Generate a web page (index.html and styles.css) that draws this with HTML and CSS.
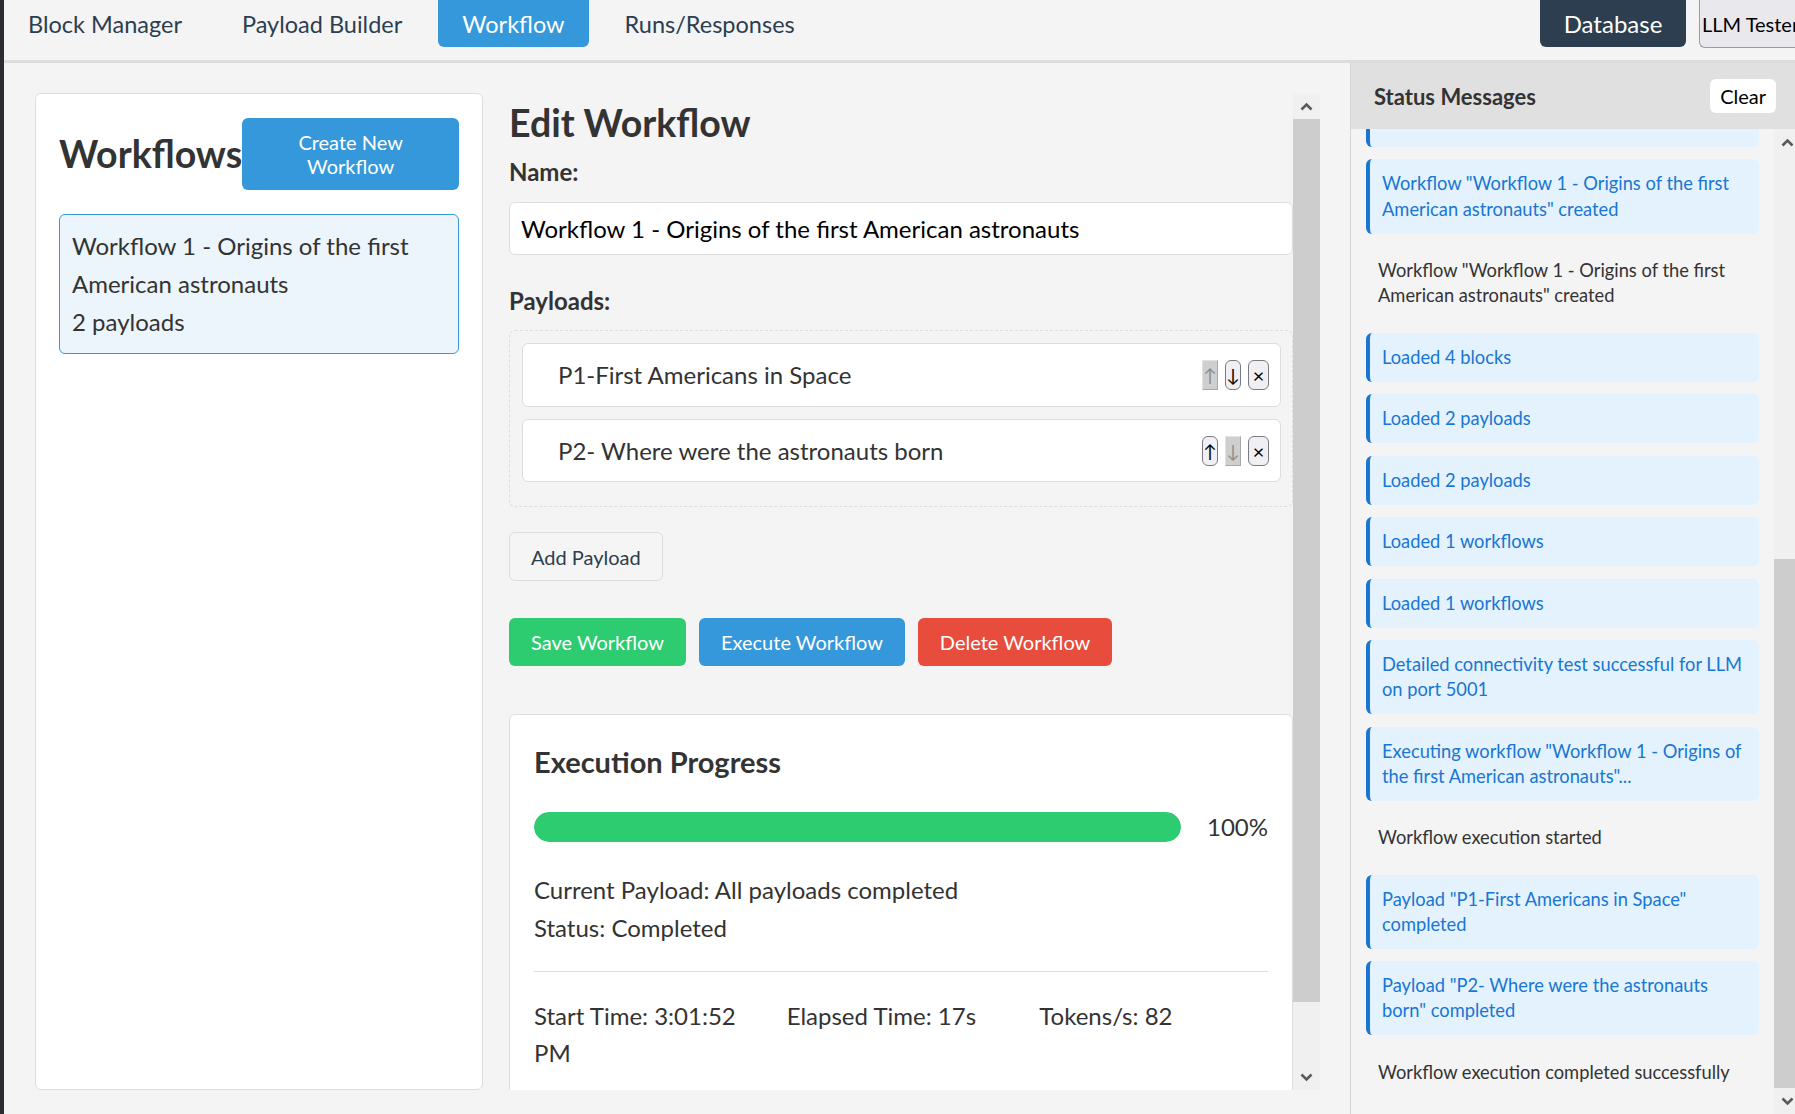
FILE: index.html
```html
<!DOCTYPE html>
<html lang="en">
<head>
<meta charset="utf-8">
<title>Workflow</title>
<link rel="stylesheet" href="styles.css">
</head>
<body>
<div class="app">
  <header class="topbar">
    <nav class="tabs">
      <button class="tab">Block Manager</button>
      <button class="tab">Payload Builder</button>
      <button class="tab active">Workflow</button>
      <button class="tab">Runs/Responses</button>
    </nav>
    <div class="top-actions">
      <button class="db-btn">Database</button>
      <button class="llm-btn">LLM Tester</button>
    </div>
  </header>

  <main class="main">
    <div class="workspace">
      <aside class="wf-panel">
        <div class="wf-head">
          <h2>Workflows</h2>
          <button class="btn btn-blue">Create New Workflow</button>
        </div>
        <div class="wf-item">
          <div class="wf-name">Workflow 1 - Origins of the first American astronauts</div>
          <div class="wf-meta">2 payloads</div>
        </div>
      </aside>

      <section class="editor">
        <div class="editor-scroll">
          <h2 class="editor-title">Edit Workflow</h2>
          <label class="field-label">Name:</label>
          <input class="name-input" type="text" value="Workflow 1 - Origins of the first American astronauts">
          <label class="field-label payloads-label">Payloads:</label>
          <div class="payload-list">
            <div class="payload-item">
              <span class="payload-name">P1-First Americans in Space</span>
              <div class="item-actions">
                <button class="mini" disabled>↑</button>
                <button class="mini">↓</button>
                <button class="mini mini-x">×</button>
              </div>
            </div>
            <div class="payload-item">
              <span class="payload-name">P2- Where were the astronauts born</span>
              <div class="item-actions">
                <button class="mini">↑</button>
                <button class="mini" disabled>↓</button>
                <button class="mini mini-x">×</button>
              </div>
            </div>
          </div>
          <button class="btn btn-light">Add Payload</button>
          <div class="actions">
            <button class="btn btn-green">Save Workflow</button>
            <button class="btn btn-blue">Execute Workflow</button>
            <button class="btn btn-red">Delete Workflow</button>
          </div>
          <div class="progress-card">
            <h3>Execution Progress</h3>
            <div class="progress-row">
              <div class="bar"><div class="bar-fill" style="width: 100%"></div></div>
              <span class="pct">100%</span>
            </div>
            <div class="progress-info">
              <div>Current Payload: All payloads completed</div>
              <div>Status: Completed</div>
            </div>
            <div class="divider"></div>
            <div class="stats">
              <div>Start Time: 3:01:52 PM</div>
              <div>Elapsed Time: 17s</div>
              <div>Tokens/s: 82</div>
            </div>
          </div>
        </div>
        <div class="scrollbar sb-editor">
          <span class="sb-btn"><svg width="13" height="9" viewBox="0 0 13 9"><polyline points="1.5,7.5 6.5,2.5 11.5,7.5" fill="none" stroke="#5a5a5a" stroke-width="2.6"/></svg></span>
          <span class="sb-thumb"></span>
          <span class="sb-track"></span>
          <span class="sb-btn"><svg width="13" height="9" viewBox="0 0 13 9"><polyline points="1.5,1.5 6.5,6.5 11.5,1.5" fill="none" stroke="#5a5a5a" stroke-width="2.6"/></svg></span>
        </div>
      </section>
    </div>

    <aside class="status">
      <div class="status-head">
        <h3>Status Messages</h3>
        <button class="clear-btn">Clear</button>
      </div>
      <div class="status-body">
        <div class="status-list">
          <div class="status-inner">
            <div class="msg msg-info">Loaded 4 blocks</div>
            <div class="msg msg-info">Workflow "Workflow 1 - Origins of the first American astronauts" created</div>
            <div class="msg">Workflow "Workflow 1 - Origins of the first American astronauts" created</div>
            <div class="msg msg-info">Loaded 4 blocks</div>
            <div class="msg msg-info">Loaded 2 payloads</div>
            <div class="msg msg-info">Loaded 2 payloads</div>
            <div class="msg msg-info">Loaded 1 workflows</div>
            <div class="msg msg-info">Loaded 1 workflows</div>
            <div class="msg msg-info">Detailed connectivity test successful for LLM on port 5001</div>
            <div class="msg msg-info">Executing workflow "Workflow 1 - Origins of the first American astronauts"...</div>
            <div class="msg">Workflow execution started</div>
            <div class="msg msg-info">Payload "P1-First Americans in Space" completed</div>
            <div class="msg msg-info">Payload "P2- Where were the astronauts born" completed</div>
            <div class="msg">Workflow execution completed successfully</div>
          </div>
        </div>
        <div class="scrollbar sb-status">
          <span class="sb-btn"><svg width="13" height="9" viewBox="0 0 13 9"><polyline points="1.5,7.5 6.5,2.5 11.5,7.5" fill="none" stroke="#5a5a5a" stroke-width="2.6"/></svg></span>
          <span class="sb-track"></span>
          <span class="sb-thumb"></span>
          <span class="sb-btn"><svg width="13" height="9" viewBox="0 0 13 9"><polyline points="1.5,1.5 6.5,6.5 11.5,1.5" fill="none" stroke="#5a5a5a" stroke-width="2.6"/></svg></span>
        </div>
      </div>
    </aside>
  </main>
</div>
</body>
</html>
```

FILE: styles.css
```css
* { box-sizing: border-box; }

html, body {
  margin: 0;
  padding: 0;
  overflow: hidden;
  background: #f4f4f4;
}

body {
  font-family: Lato, "Liberation Sans", sans-serif;
  color: #333;
}

button, input {
  font-family: inherit;
}

.app {
  width: 1800px;
  height: 1114px;
  border-left: 4px solid #2b2b31;
  display: flex;
  flex-direction: column;
  background: #f4f4f4;
}

/* ---------- top bar ---------- */
.topbar {
  flex: none;
  height: 63px;
  display: flex;
  align-items: flex-start;
  border-bottom: 3px solid #dcdcdc;
}

.tabs {
  display: flex;
  gap: 12px;
}

.tab {
  height: 47px;
  padding: 0 24px;
  border: 0;
  background: transparent;
  color: #2c3e50;
  font-size: 23.5px;
  border-radius: 0 0 6px 6px;
  white-space: nowrap;
}

.tab.active {
  background: #3498db;
  color: #fff;
}

.top-actions {
  margin-left: auto;
  display: flex;
  gap: 13px;
}

.db-btn {
  height: 47px;
  width: 146px;
  border: 0;
  border-radius: 0 0 6px 6px;
  background: #2c3e50;
  color: #fff;
  font-size: 24px;
}

.llm-btn {
  height: 48px;
  width: 101px;
  padding: 0 0 0 2px;
  text-align: left;
  white-space: nowrap;
  overflow: visible;
  border: 1.5px solid #9a9aa6;
  border-top: 0;
  border-right: 0;
  border-radius: 0 0 0 6px;
  background: #e9e9ed;
  color: #000;
  font-size: 20px;
}

/* ---------- main ---------- */
.main {
  flex: 1;
  display: flex;
  min-height: 0;
}

.workspace {
  width: 1346px;
  flex: none;
  display: flex;
  gap: 24px;
  padding: 30px 30px 24px 31px;
}

/* left workflows card */
.wf-panel {
  width: 448px;
  flex: none;
  background: #fff;
  border: 1.5px solid #dedede;
  border-radius: 6px;
  padding: 23.5px 23px;
}

.wf-head {
  display: flex;
  align-items: center;
  justify-content: space-between;
  margin-bottom: 24px;
}

.wf-head h2 {
  margin: 0;
  font-size: 37.5px;
  line-height: 44px;
  font-weight: 700;
  white-space: nowrap;
  color: #333;
}

.wf-item {
  border: 1.5px solid #3498db;
  background: #ebf5fb;
  border-radius: 6px;
  padding: 12px 12px;
  font-size: 24px;
  line-height: 38px;
  color: #333;
}

/* buttons */
.btn {
  border: 0;
  border-radius: 6px;
  padding: 12px 22px;
  font-size: 20px;
  line-height: 24px;
  color: #fff;
}

.btn-blue { background: #3498db; }
.btn-green { background: #2ecc71; }
.btn-red { background: #e74c3c; }

.btn-light {
  display: block;
  height: 49px;
  margin-top: 25px;
  padding: 0 21px;
  background: #f5f5f5;
  border: 1.5px solid #dddddd;
  color: #2c3e50;
}

/* editor column */
.editor {
  width: 813px;
  flex: none;
  display: flex;
}

.editor-scroll {
  flex: 1;
  min-width: 0;
  overflow: hidden;
  padding: 8px 0 0 2px;
}

.editor-title {
  margin: 0 0 9px;
  font-size: 37.5px;
  line-height: 44px;
  font-weight: 700;
  color: #333;
}

.field-label {
  display: block;
  font-size: 24px;
  line-height: 36px;
  font-weight: 700;
  color: #333;
  margin-bottom: 12px;
}

.payloads-label {
  margin-top: 28px;
  margin-bottom: 11px;
}

.name-input {
  display: block;
  width: 100%;
  height: 53px;
  padding: 0 11px;
  border: 1.5px solid #dddddd;
  border-radius: 6px;
  background: #fff;
  color: #000;
  font-size: 24px;
}

.payload-list {
  border: 1.5px dashed #dddddd;
  border-radius: 6px;
  padding: 12px 11.5px;
}

.payload-item {
  height: 64px;
  display: flex;
  align-items: center;
  justify-content: space-between;
  background: #fff;
  border: 1.5px solid #dddddd;
  border-radius: 6px;
  padding: 0 10.5px 0 35.5px;
  margin-bottom: 12px;
}

.payload-item + .payload-item {
  height: 63px;
}

.payload-name {
  font-size: 24px;
  line-height: 30px;
  color: #333;
}

.item-actions {
  display: flex;
  gap: 7px;
}

.mini {
  width: 16px;
  height: 30px;
  padding: 0;
  border: 1px solid #7a7a84;
  border-radius: 6px;
  background: #f0f0f4;
  color: #000;
  font-size: 18px;
  line-height: 26px;
  text-align: center;
}

.mini-x {
  width: 21px;
  font-size: 20px;
}

.mini:disabled {
  border-radius: 0;
  background: #cfcfcf;
  color: #8e8e8e;
  border-color: #e2e2e2 #a8a8a8 #a8a8a8 #e2e2e2;
}

.actions {
  display: flex;
  gap: 13px;
  margin-top: 37px;
}

.actions .btn {
  height: 48px;
  padding: 0 22px;
}

/* execution progress */
.progress-card {
  margin-top: 48px;
  background: #fff;
  border: 1.5px solid #dddddd;
  border-radius: 6px;
  padding: 24px 24px;
  height: 420px;
}

.progress-card h3 {
  margin: 3px 0 29.5px;
  font-size: 29px;
  line-height: 40px;
  font-weight: 700;
  color: #333;
}

.progress-row {
  display: flex;
  align-items: center;
  gap: 26px;
}

.bar {
  flex: 1;
  height: 30px;
  border-radius: 15px;
  background: #eeeeee;
  overflow: hidden;
}

.bar-fill {
  height: 100%;
  background: #2ecc71;
  border-radius: 15px;
}

.pct {
  font-size: 24px;
  line-height: 30px;
  color: #333;
}

.progress-info {
  margin-top: 29px;
  font-size: 24px;
  line-height: 38px;
  color: #333;
}

.divider {
  margin: 24px 0 25.5px;
  border-top: 1.5px solid #dddddd;
}

.stats {
  display: grid;
  grid-template-columns: repeat(3, 1fr);
  gap: 24px;
  font-size: 24px;
  line-height: 37px;
  color: #333;
}

/* fake scrollbars */
.scrollbar {
  flex: none;
  display: flex;
  flex-direction: column;
  background: #f0f0f0;
}

.sb-editor { width: 27px; }
.sb-status { width: 26px; }

.sb-btn {
  flex: none;
  height: 26px;
  display: flex;
  align-items: center;
  justify-content: center;
}

.sb-thumb {
  flex: none;
  background: #cdcdcd;
}

.sb-track { flex: 1; }

.sb-editor .sb-thumb { height: 883px; }
.sb-status .sb-thumb { height: 529px; }

/* status panel */
.status {
  width: 450px;
  flex: none;
  display: flex;
  flex-direction: column;
  border-left: 1px solid #d4d4d4;
  min-height: 0;
}

.status-head {
  flex: none;
  height: 66px;
  background: #e0e0e0;
  display: flex;
  align-items: center;
  justify-content: space-between;
  padding: 0 24px 0 23px;
}

.status-head h3 {
  margin: 0;
  font-size: 22px;
  font-weight: 700;
  color: #333;
}

.clear-btn {
  height: 34px;
  padding: 0 10px;
  border: 0;
  border-radius: 6px;
  background: #fff;
  color: #000;
  font-size: 20px;
}

.status-body {
  flex: 1;
  display: flex;
  min-height: 0;
}

.status-list {
  flex: 1;
  min-width: 0;
  overflow: hidden;
  padding: 0 15px;
}

.status-inner {
  display: flex;
  flex-direction: column;
  gap: 12.4px;
  margin-top: -31px;
}

.msg {
  flex: none;
  padding: 12px 16px 12px 12px;
  border-radius: 6px;
  font-size: 18.3px;
  line-height: 25.1px;
  color: #333;
}

.msg-info {
  background: #e3f2fd;
  border-left: 4px solid #1976d2;
  color: #1976d2;
}
```
